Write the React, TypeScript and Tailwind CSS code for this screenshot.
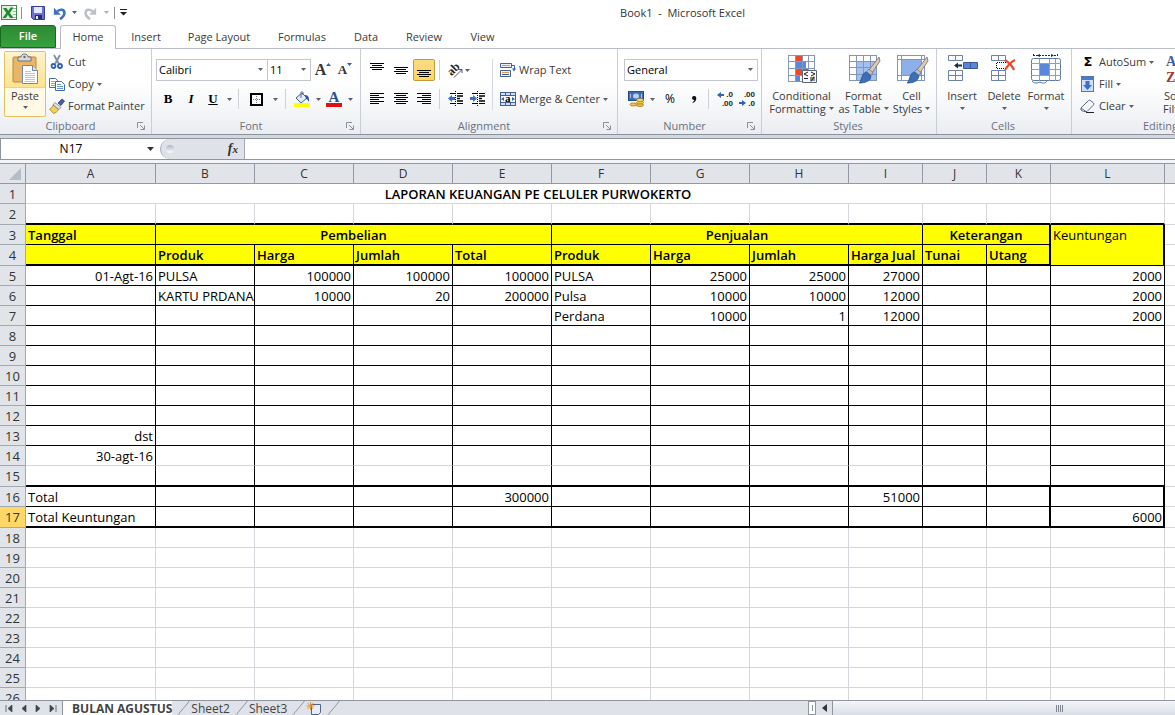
import type { ReactNode } from "react"

type IconProps = { children: ReactNode; size?: number; box?: number }

function Icon({ children, size = 16, box = 16 }: IconProps) {
    return (
        <svg width={size} height={size} viewBox={`0 0 ${box} ${box}`} fill="none" className="shrink-0 overflow-visible" aria-hidden="true">
            {children}
        </svg>
    )
}

function Caret() {
    return (
        <svg width="5" height="3" viewBox="0 0 5 3" className="shrink-0" aria-hidden="true">
            <path d="M0 0h5L2.5 3z" fill="#5c6066" />
        </svg>
    )
}

/* ---------- Icons ---------- */

function ExcelLogo() {
    return (
        <Icon>
            <rect x=".5" y=".5" width="15" height="14" fill="#fff" stroke="#3b8f45" />
            <path d="M11 3.500h4M11 6.500h4M11 9.500h4M11 12.500h4" stroke="#8cc491" />
            <rect x="1" y="1" width="11" height="13" fill="#dff0da" />
            <path d="M2 3h3.500l1.800 2.800L9.500 2.500h3L8.800 8l3.700 5H9L6.900 9.800 4.800 13H1.500l3.800-5z" fill="#1f8a33" />
        </Icon>
    )
}

function SaveIcon() {
    return (
        <Icon>
            <path d="M1.500 1.500h13v13h-11l-2-2z" fill="#6a72d4" stroke="#363c94" />
            <path d="M4 2h8v6H4z" fill="#e4e9ff" />
            <path d="M5 10h7v4H5z" fill="#262b66" />
            <path d="M6 11h2v3H6z" fill="#e8ebff" />
        </Icon>
    )
}

function UndoIcon({ redo = false }: { redo?: boolean }) {
    return (
        <Icon size={14} box={16}>
            <g transform={redo ? "translate(16 0) scale(-1 1)" : undefined}>
                <path d="M5 6c4-3 8-2 8 2 0 3-2 5-5 7" stroke={redo ? "#bcc0c6" : "#3e70c4"} strokeWidth="3" />
                <path d="M1 2v8h8z" fill={redo ? "#bcc0c6" : "#3e70c4"} />
            </g>
        </Icon>
    )
}

function PasteIcon() {
    return (
        <Icon size={32} box={32}>
            <rect x="4" y="3" width="23" height="25" rx="1" fill="#e9b567" stroke="#b98a45" />
            <path d="M9 3h3c0-2 1.500-3 3.500-3S19 1 19 3h3v4H9z" fill="#d8dbe0" stroke="#6c7077" />
            <circle cx="15.500" cy="3" r="1.200" fill="#6c7077" />
            <path d="M13.500 11.500h10l5 5v13h-15z" fill="#fff" stroke="#6f87ab" />
            <path d="M23.500 11.500v5h5" fill="#dbe5f3" stroke="#6f87ab" />
            <path d="M16 17.500h6M16 19.500h10M16 21.500h10M16 23.500h10M16 25.500h10M16 27.500h10" stroke="#b3c7e4" />
        </Icon>
    )
}

function CutIcon() {
    return (
        <Icon>
            <path d="M5 1l5 9M11 1L6 10" stroke="#7d8ea8" strokeWidth="1.800" />
            <circle cx="4.500" cy="12" r="2" stroke="#2d62b4" strokeWidth="1.800" />
            <circle cx="11" cy="12" r="2" stroke="#2d62b4" strokeWidth="1.800" />
        </Icon>
    )
}

function CopyIcon() {
    return (
        <Icon>
            <path d="M.5 2.500h6l2 2v7h-8z" fill="#fff" stroke="#3f6cae" />
            <path d="M2 5.500h4M2 7.500h5M2 9.500h5" stroke="#86a9dc" />
            <path d="M6.500 5.500h6l3 3v6h-9z" fill="#fff" stroke="#3f6cae" />
            <path d="M8 8.500h4M8 10.500h6M8 12.500h6" stroke="#6b97d8" />
        </Icon>
    )
}

function BrushIcon() {
    return (
        <Icon>
            <path d="M9 5l4-4 2.500 2-3.500 4.500z" fill="#4a5fa5" stroke="#2f3d73" strokeWidth=".8" />
            <path d="M6 4.500l6 5-2 2-6-4.500z" fill="#e0e3ea" stroke="#7a7f8a" strokeWidth=".8" />
            <path d="M4 7l5.500 4.500c-1 2-3 3.500-5 4L.5 11C2.500 10 3.500 9 4 7z" fill="#f2cf62" stroke="#a27d22" strokeWidth=".8" />
        </Icon>
    )
}

function BordersIcon() {
    return (
        <svg width="13" height="13" viewBox="0 0 13 13" fill="none" shapeRendering="crispEdges" aria-hidden="true">
            <rect x="1" y="1" width="11" height="11" stroke="#000" strokeWidth="2" fill="#fff" />
            <path d="M6.500 3v8M3 6.500h8" stroke="#777" strokeDasharray="1 1" />
        </svg>
    )
}

function BucketIcon() {
    return (
        <Icon>
            <path d="M2 7l6-5 5 5-6 5z" fill="#e4ecf7" stroke="#3c5d94" />
            <path d="M7 7V1.500c0-1 2-1 2 0V4" stroke="#5b6b85" />
            <path d="M11 4c3 0 4.500 2 4 7-1-2-2-3-3-3z" fill="#2d57a5" />
            <path d="M0 12h16v4H0z" fill="#ffff00" />
        </Icon>
    )
}

// bars are [x, width] pairs, one for each text line
function LinesIcon({ bars, y }: { bars: [number, number][]; y: number }) {
    return (
        <svg width="15" height="16" viewBox="0 0 15 16" shapeRendering="crispEdges" aria-hidden="true">
            {bars.map(([x, w], i) => (
                <rect key={i} x={x} y={y + i * 2} width={w} height="1" fill="#000" />
            ))}
        </svg>
    )
}

const shortBars: [number, number][] = [[0, 14], [2, 10], [0, 14], [2, 10]]
const leftBars: [number, number][] = [[0, 14], [0, 9], [0, 14], [0, 9], [0, 14], [0, 9]]
const centerBars: [number, number][] = [[0, 14], [2, 10], [0, 14], [2, 10], [0, 14], [2, 10]]
const rightBars: [number, number][] = [[0, 14], [5, 9], [0, 14], [5, 9], [0, 14], [5, 9]]

function IndentIcon({ increase = false }: { increase?: boolean }) {
    return (
        <Icon>
            <path d="M2 2.500h5M9 2.500h6M2 12.500h5M9 12.500h6" stroke="#000" />
            <path d="M9 5h6M9 7.500h3M9 10h6" stroke="#000" strokeWidth="1.500" />
            <path d="M7.500 0v16" stroke="#000" strokeDasharray="1 1" />
            <path d={increase ? "M0 6h3V4l4 3.500L3 11V9H0z" : "M7 6H4V4L0 7.500 4 11V9h3z"} fill="#3a6fc6" />
        </Icon>
    )
}

function WrapIcon() {
    return (
        <Icon>
            <path d="M.5 1.500h11v4H.5zM.5 8.500h10v6H.5z" fill="#eef3fb" stroke="#44618f" />
            <path d="M2 3.500h8M2 10.500h7" stroke="#e09a4b" />
            <path d="M2 12.500h7" stroke="#44618f" />
            <path d="M11.500 3.500h3v4" stroke="#2d62b4" />
            <path d="M12 6.500h4l-2 3z" fill="#2d62b4" />
        </Icon>
    )
}

function MergeIcon() {
    return (
        <Icon>
            <rect x=".5" y="1.500" width="15" height="13" fill="#cfdff5" stroke="#44618f" />
            <path d="M0 4.500h16M0 11.500h16M5.500 1v3M10.500 1v3M5.500 12v3M10.500 12v3" stroke="#44618f" />
            <path d="M1 5h14v6H1z" fill="#fff" />
            <path d="M1 8l3-2v4zM15 8l-3-2v4z" fill="#2d62b4" />
            <text x="5" y="11" fontSize="11" fontWeight="700" fontFamily="Liberation Serif, serif" fill="#000">
                a
            </text>
        </Icon>
    )
}

function CurrencyIcon() {
    return (
        <Icon>
            <rect x=".5" y=".5" width="15" height="9" fill="#3e6cb6" stroke="#2a4c86" />
            <ellipse cx="8" cy="5" rx="3" ry="2.500" fill="#b9d0f2" />
            <path d="M2.500 3v4M13.500 3v4" stroke="#a9c4ec" />
            <ellipse cx="5.500" cy="13.500" rx="3.500" ry="1.500" fill="#f0c64a" stroke="#a47a17" strokeWidth=".8" />
            <path d="M9 9h6v5.500H9z" fill="#f0c64a" />
            <ellipse cx="12" cy="14" rx="3.500" ry="1.500" fill="#f0c64a" stroke="#a47a17" strokeWidth=".8" />
            <ellipse cx="12" cy="11.500" rx="3.500" ry="1.500" fill="#f0c64a" stroke="#a47a17" strokeWidth=".8" />
            <ellipse cx="12" cy="9" rx="3.500" ry="1.500" fill="#fbe08a" stroke="#a47a17" strokeWidth=".8" />
        </Icon>
    )
}

function DecimalIcon({ top, bottom, left = false }: { top: string; bottom: string; left?: boolean }) {
    return (
        <Icon>
            <g fontFamily="Liberation Sans, sans-serif" fontSize="8" fontWeight="700" fill="#222">
                <text x="16" y="6" textAnchor="end">{top}</text>
                <text x="16" y="15" textAnchor="end">{bottom}</text>
            </g>
            <path d={left ? "M0 4l4-3v2h3v2H4v2z" : "M7 12l-4-3v2H0v2h3v2z"} fill="#2d62b4" />
        </Icon>
    )
}

function ConditionalIcon() {
    return (
        <Icon size={32} box={32}>
            <path d="M2 1h27v27H2z" fill="#fff" />
            <path d="M9 1h7v7H9z" fill="#e8492f" />
            <path d="M9 7.500h11v6.500H9z" fill="#5b86dd" />
            <path d="M9 14h14v7H9z" fill="#e8492f" />
            <path d="M9 21h5v7H9z" fill="#5b86dd" />
            <path d="M2.500 1v27M9.500 1v27M16.500 1v27M22.500 1v27M28.500 1v27M2 1.500h27M2 7.500h27M2 14.500h27M2 21.500h27M2 27.500h27" stroke="#8398bd" />
            <path d="M16.500 16.500h14v12h-14z" fill="#f7f9fc" stroke="#59657a" />
            <path d="M22 18l-4 2 4 2M18 24.500h4M25 18l4 2-4 2M24 24h5M24 26h5M28 22.500l-3 5" stroke="#222" />
        </Icon>
    )
}

function PaintBrush() {
    return (
        <>
            <path d="M31 3L21 16l3 3 8-12z" fill="#d9cbb5" stroke="#7d6b55" strokeWidth=".8" />
            <path d="M21 15l4 3.500-2 3-4.500-4z" fill="#b7bcc6" stroke="#6d7480" strokeWidth=".8" />
            <path d="M18 18l5 4c-1 5-5 7-12 7 3-2 2-9 7-11z" fill="#3d6fb8" stroke="#28508c" strokeWidth=".8" />
        </>
    )
}

function FormatTableIcon() {
    return (
        <Icon size={32} box={32}>
            <path d="M1 1h28v26H1z" fill="#fff" />
            <path d="M8 8h21v19H8z" fill="#a3c0f0" />
            <path d="M1.500 1v26M8.500 1v26M15.500 1v26M22.500 1v26M28.500 1v26M1 1.500h28M1 7.500h28M1 13.500h28M1 20.500h28M1 26.500h28" stroke="#7f96bf" />
            <PaintBrush />
        </Icon>
    )
}

function CellStylesIcon() {
    return (
        <Icon size={32} box={32}>
            <path d="M1 1h28v26H1z" fill="#fff" />
            <path d="M6 6h19v16H6z" fill="#8db0ea" />
            <path d="M1.500 1v26M5.500 1v26M25.500 1v26M28.500 1v26M1 1.500h28M1 5.500h28M1 21.500h28M1 26.500h28" stroke="#7f96bf" />
            <PaintBrush />
        </Icon>
    )
}

function InsertCellsIcon() {
    return (
        <Icon size={32} box={32}>
            <path d="M2.500 1.500h14v5h-14zM9.500 1v6M2.500 16.500h14v10h-14zM9.500 16v11M2 21.500h15" fill="#fff" stroke="#6d82a8" />
            <path d="M17.500 8.500h14v6h-14z" fill="#5b86dd" stroke="#3a5796" />
            <path d="M24.500 8v7" stroke="#3a5796" />
            <path d="M8 11.500l4-3v2h4v2h-4v2z" fill="#1d2b45" />
        </Icon>
    )
}

function DeleteCellsIcon() {
    return (
        <Icon size={32} box={32}>
            <path d="M3.500 1.500h14v5h-14zM10.500 1v6M3.500 16.500h14v10h-14zM10.500 16v11M3 21.500h15" fill="#fff" stroke="#6d82a8" />
            <path d="M9 8.500h10M9 14.500h10M8.500 9v6" stroke="#000" strokeDasharray="1 1" />
            <path d="M17 6c3 2 7 5 9 10M27 6c-4 2-7 5-10 10" stroke="#e8492f" strokeWidth="2.200" />
        </Icon>
    )
}

function FormatCellsIcon() {
    return (
        <Icon size={32} box={32}>
            <path d="M3 1.500h24M3.500 0v3M27.500 0v3" stroke="#1d2b45" strokeDasharray="2 1" />
            <path d="M10 0L7 1.500 10 3zM21 0l3 1.500L21 3z" fill="#1d2b45" />
            <rect x="1.500" y="4.500" width="29" height="22" rx="2" fill="#fff" stroke="#5c77a8" />
            <path d="M1 9.500h30M1 15.500h30M1 21.500h30M9.500 5v22M19.500 5v22M25.500 5v22" stroke="#8ba0c6" />
            <path d="M10 10h9v11h-9z" fill="#5b86dd" />
            <path d="M2 27c2 3 6 2 8 1 3 2 6 1 7-1" stroke="#5c77a8" fill="#fff" />
        </Icon>
    )
}

function FillIcon() {
    return (
        <Icon>
            <rect x="1.500" y=".5" width="12" height="15" fill="#cfe0f8" stroke="#5877a8" />
            <path d="M1 1h13v3H1z" fill="#4a7bd0" />
            <path d="M5.500 5h4v4H12l-4.500 5L3 9h2.500z" fill="#3a6fd0" />
        </Icon>
    )
}

function EraserIcon() {
    return (
        <Icon>
            <path d="M1 10l7-7c1-1 2-1 3 0l2 1.500c1 1 1 2 0 3L7 13.500H3.500L1 12z" fill="#f4f6fa" stroke="#5c6a80" />
            <path d="M1 10l5 3.500" stroke="#5c6a80" />
            <path d="M6 14.500h8" stroke="#222" />
        </Icon>
    )
}

/* ---------- Ribbon pieces ---------- */

function Group({ label, className, launcher = false, children }: { label: string; className: string; launcher?: boolean; children: ReactNode }) {
    return (
        <section aria-label={label} className={`flex shrink-0 flex-col border-r border-[#c9cdd4] ${className}`}>
            <div className="min-h-0 flex-1">{children}</div>
            <div className="flex h-4 items-center justify-end pr-[6px] pl-1">
                <span className="flex-1 text-center text-[#69707c]">{label}</span>
                {launcher && (
                    <button aria-label={`${label} settings`}>
                        <svg width="8" height="8" viewBox="0 0 8 8" fill="none" aria-hidden="true">
                            <path d="M.5 6V.5H6M3 3l4 4M7.500 3.500v4h-4" stroke="#8b919b" />
                        </svg>
                    </button>
                )}
            </div>
        </section>
    )
}

function Tool({ label, className = "w-6", children }: { label: string; className?: string; children: ReactNode }) {
    return (
        <button aria-label={label} className={`flex h-[22px] shrink-0 items-center justify-center ${className}`}>
            {children}
        </button>
    )
}

function Divider() {
    return <span className="mx-1 h-5 w-px shrink-0 bg-[#cdd1d8]" />
}

function Combo({ label, value, className }: { label: string; value: string; className: string }) {
    return (
        <div className={`relative h-[22px] border border-[#c3c7cf] bg-white ${className}`}>
            <select aria-label={label} defaultValue={value} className="block h-5 w-full appearance-none bg-transparent px-[2px] text-black outline-none">
                <option>{value}</option>
            </select>
            <span className="pointer-events-none absolute top-[8px] right-[4px] flex">
                <Caret />
            </span>
        </div>
    )
}

function SmallButton({ icon, text, menu = false }: { icon: ReactNode; text: string; menu?: boolean }) {
    return (
        <button className="flex h-[22px] items-center gap-[3px] whitespace-nowrap">
            {icon}
            <span>{text}</span>
            {menu && <Caret />}
        </button>
    )
}

function BigButton({ icon, lines, className }: { icon: ReactNode; lines: [string, string?]; className: string }) {
    return (
        <button className={`flex shrink-0 flex-col items-center whitespace-nowrap leading-[13px] ${className}`}>
            {icon}
            <span className="mt-[3px]">{lines[0]}</span>
            <span className="flex h-[13px] items-center gap-[3px]">
                {lines[1]}
                <Caret />
            </span>
        </button>
    )
}

function Ribbon() {
    return (
        <div className="flex h-[86px] shrink-0 overflow-hidden border-b border-[#8c929b] bg-linear-to-b from-white from-40% to-[#eaedf1]">
            <Group label="Clipboard" className="w-[152px]" launcher>
                <div className="flex pt-[2px] pl-1">
                    <button className="flex h-[66px] w-[42px] flex-col items-center rounded-[2px] border border-[#e3c15f] bg-[#fff9e6]">
                        <span className="flex h-9 w-full items-center justify-center border-b border-[#ecd37f] bg-linear-to-b from-[#fdf3cf] to-[#fce38f]">
                            <PasteIcon />
                        </span>
                        <span className="leading-4">Paste</span>
                        <span className="flex pt-[2px]"><Caret /></span>
                    </button>
                    <div className="pl-[3px]">
                        <SmallButton icon={<CutIcon />} text="Cut" />
                        <SmallButton icon={<CopyIcon />} text="Copy" menu />
                        <SmallButton icon={<BrushIcon />} text="Format Painter" />
                    </div>
                </div>
            </Group>

            <Group label="Font" className="w-[209px]" launcher>
                <div className="flex flex-col gap-[7px] pt-[10px] pl-1">
                    <div className="flex items-center">
                        <Combo label="Font name" value="Calibri" className="w-[112px]" />
                        <Combo label="Font size" value="11" className="w-[43px] border-l-0" />
                        <Tool label="Grow font">
                            <span className="font-['Liberation_Serif',serif] text-base font-bold text-[#333]">A</span>
                            <svg width="5" height="3" viewBox="0 0 5 3" className="mb-3" aria-hidden="true">
                                <path d="M0 3h5L2.500 0z" fill="#2d62b4" />
                            </svg>
                        </Tool>
                        <Tool label="Shrink font" className="w-5">
                            <span className="font-['Liberation_Serif',serif] text-[13px] font-bold text-[#333]">A</span>
                            <svg width="5" height="3" viewBox="0 0 5 3" className="mb-3" aria-hidden="true">
                                <path d="M0 0h5L2.500 3z" fill="#2d62b4" />
                            </svg>
                        </Tool>
                    </div>
                    <div className="flex items-center text-black">
                        <Tool label="Bold">
                            <span className="font-['Liberation_Serif',serif] text-[13px] font-bold">B</span>
                        </Tool>
                        <Tool label="Italic" className="w-[22px]">
                            <span className="font-['Liberation_Serif',serif] text-[13px] font-bold italic">I</span>
                        </Tool>
                        <Tool label="Underline" className="w-[22px]">
                            <span className="font-['Liberation_Serif',serif] text-[13px] font-bold underline">U</span>
                        </Tool>
                        <Tool label="Underline style" className="w-[10px]"><Caret /></Tool>
                        <Divider />
                        <Tool label="Borders" className="w-[26px]"><BordersIcon /></Tool>
                        <Tool label="Border style" className="w-3"><Caret /></Tool>
                        <Divider />
                        <Tool label="Fill colour"><BucketIcon /></Tool>
                        <Tool label="Fill colour list" className="w-2"><Caret /></Tool>
                        <Tool label="Font colour">
                            <span className="flex w-4 flex-col items-center border-b-4 border-[#e01010] font-['Liberation_Serif',serif] text-[15px] leading-3 font-bold text-[#2c4f8f]">A</span>
                        </Tool>
                        <Tool label="Font colour list" className="w-2"><Caret /></Tool>
                    </div>
                </div>
            </Group>

            <Group label="Alignment" className="w-[257px]" launcher>
                <div className="flex pt-[10px] pl-1">
                    <div className="flex flex-col gap-[7px]">
                        <div className="flex items-center">
                            <Tool label="Top align"><LinesIcon bars={shortBars} y={1} /></Tool>
                            <Tool label="Middle align"><LinesIcon bars={shortBars} y={5} /></Tool>
                            <Tool label="Bottom align" className="w-[22px] rounded-[2px] border border-[#c29a3a] bg-linear-to-b from-[#fbdb83] to-[#ffd75e]">
                                <LinesIcon bars={shortBars} y={8} />
                            </Tool>
                            <Divider />
                            <Tool label="Orientation" className="w-7 gap-[2px]">
                                <Icon>
                                    <text x="1" y="10" transform="rotate(-45 8 8)" fontFamily="Liberation Serif, serif" fontSize="12" fontWeight="700" fill="#222">ab</text>
                                    <path d="M7 15.500l8-8M15 11V7.500h-4" stroke="#555" />
                                </Icon>
                                <Caret />
                            </Tool>
                        </div>
                        <div className="flex items-center">
                            <Tool label="Align left"><LinesIcon bars={leftBars} y={2} /></Tool>
                            <Tool label="Centre"><LinesIcon bars={centerBars} y={2} /></Tool>
                            <Tool label="Align right" className="w-[22px]"><LinesIcon bars={rightBars} y={2} /></Tool>
                            <Divider />
                            <Tool label="Decrease indent"><IndentIcon /></Tool>
                            <Tool label="Increase indent" className="w-5"><IndentIcon increase /></Tool>
                        </div>
                    </div>
                    <div className="ml-1 flex flex-col gap-[7px] border-l border-[#d5d8de] pl-[7px]">
                        <SmallButton icon={<WrapIcon />} text="Wrap Text" />
                        <SmallButton icon={<MergeIcon />} text="Merge & Center" menu />
                    </div>
                </div>
            </Group>

            <Group label="Number" className="w-[144px]" launcher>
                <div className="flex flex-col gap-[7px] pt-[10px] pr-[3px] pl-[6px]">
                    <Combo label="Number format" value="General" className="w-full" />
                    <div className="flex items-center text-black">
                        <Tool label="Currency"><CurrencyIcon /></Tool>
                        <Tool label="Currency list" className="w-2"><Caret /></Tool>
                        <Tool label="Percent" className="w-7"><span className="text-xs">%</span></Tool>
                        <Tool label="Comma" className="w-5">
                            <svg width="5" height="7" viewBox="0 0 5 7" aria-hidden="true">
                                <path d="M0 2a2 2 0 1 1 4.300.3C4.300 4.500 3 6.200.8 7L.5 6.200c1-.5 1.600-1.200 1.700-2.200C1 4 0 3.200 0 2z" fill="#111" />
                            </svg>
                        </Tool>
                        <Divider />
                        <Tool label="Increase decimal"><DecimalIcon top=".0" bottom=".00" left /></Tool>
                        <Tool label="Decrease decimal" className="w-5"><DecimalIcon top=".00" bottom=".0" /></Tool>
                    </div>
                </div>
            </Group>

            <Group label="Styles" className="w-[175px]">
                <div className="flex pt-[5px] pl-1">
                    <BigButton className="w-[71px]" icon={<ConditionalIcon />} lines={["Conditional", "Formatting"]} />
                    <BigButton className="w-[53px]" icon={<FormatTableIcon />} lines={["Format", "as Table"]} />
                    <BigButton className="w-[43px]" icon={<CellStylesIcon />} lines={["Cell", "Styles"]} />
                </div>
            </Group>

            <Group label="Cells" className="w-[135px]">
                <div className="flex pt-[5px] pl-1">
                    <BigButton className="w-[42px]" icon={<InsertCellsIcon />} lines={["Insert"]} />
                    <BigButton className="w-[42px]" icon={<DeleteCellsIcon />} lines={["Delete"]} />
                    <BigButton className="w-[42px]" icon={<FormatCellsIcon />} lines={["Format"]} />
                </div>
            </Group>

            <Group label="Editing" className="w-[180px]">
                <div className="flex pt-[2px] pl-2">
                    <div className="w-[80px]">
                        <SmallButton
                            icon={<span className="w-4 text-center font-['DejaVu_Sans',sans-serif] text-[13px] font-bold text-black">Σ</span>}
                            text="AutoSum"
                            menu
                        />
                        <SmallButton icon={<FillIcon />} text="Fill" menu />
                        <SmallButton icon={<EraserIcon />} text="Clear" menu />
                    </div>
                    <div className="pt-[3px]">
                        <BigButton
                            className="w-10"
                            icon={
                                <span className="flex h-8 w-7 flex-col font-['Liberation_Serif',serif] text-sm leading-4 font-bold">
                                    <span className="self-start text-[#3a62a8]">A</span>
                                    <span className="self-start text-[#a83232]">Z</span>
                                </span>
                            }
                            lines={["Sort &", "Filter"]}
                        />
                    </div>
                </div>
            </Group>
        </div>
    )
}

/* ---------- Sheet ---------- */

const columns: [string, string][] = [
    ["A", "w-[130px]"],
    ["B", "w-[99px]"],
    ["C", "w-[99px]"],
    ["D", "w-[99px]"],
    ["E", "w-[99px]"],
    ["F", "w-[99px]"],
    ["G", "w-[99px]"],
    ["H", "w-[99px]"],
    ["I", "w-[74px]"],
    ["J", "w-[64px]"],
    ["K", "w-[64px]"],
    ["L", "w-[114px]"],
]

const subheads = ["", "Produk", "Harga", "Jumlah", "Total", "Produk", "Harga", "Jumlah", "Harga Jual", "Tunai", "Utang"]

const values: Record<number, Record<string, string>> = {
    5: { A: "01-Agt-16", B: "PULSA", C: "100000", D: "100000", E: "100000", F: "PULSA", G: "25000", H: "25000", I: "27000", L: "2000" },
    6: { B: "KARTU PRDANA", C: "10000", D: "20", E: "200000", F: "Pulsa", G: "10000", H: "10000", I: "12000", L: "2000" },
    7: { F: "Perdana", G: "10000", H: "1", I: "12000", L: "2000" },
    13: { A: "dst" },
    14: { A: "30-agt-16" },
    16: { A: "Total", E: "300000", I: "51000" },
    17: { A: "Total Keuntungan", L: "6000" },
}

// rows that close with a thick rule are one pixel taller
const thickRows = [2, 4, 15, 17]

const light = "border-[#d4d7dc]"

function RowHead({ n }: { n: number }) {
    return (
        <th
            scope="row"
            className={`border-r border-b border-[#a3a9b2] p-0 text-center font-normal text-[#333] ${n === 17 ? "bg-[#ffd766]" : "bg-[#e1e5ea]"}`}
        >
            {n}
        </th>
    )
}

function cellClass(n: number, col: string) {
    const inTable = n >= 5 && n <= 17
    let bottom = "border-b border-b-[#d4d7dc]"
    if (thickRows.includes(n)) bottom = "border-b-2 border-b-black"
    else if (inTable && (n !== 14 || col === "L")) bottom = "border-b border-b-black"

    let right = "border-r border-r-[#d4d7dc] pr-[2px]"
    if (n >= 16 && n <= 17 && (col === "K" || col === "L")) right = "border-r-2 border-r-black pr-px"
    else if (inTable) right = "border-r border-r-black pr-[2px]"

    const align = col === "B" || col === "F" || (col === "A" && n > 15) ? "text-left" : "text-right"
    return `${bottom} ${right} ${align} pl-[2px] py-0 overflow-hidden whitespace-nowrap`
}

function Spare() {
    return <td className={`border-b p-0 ${light}`} />
}

function Sheet() {
    const rows = Array.from({ length: 22 }, (_, i) => i + 5)
    return (
        <div className="min-h-0 flex-1 overflow-hidden bg-white font-['Open_Sans','Noto_Sans',sans-serif] text-[13px] leading-[18px] text-black">
            <table className="w-full table-fixed border-separate border-spacing-0">
                <colgroup>
                    <col className="w-[26px]" />
                    {columns.map(([name, width]) => (
                        <col key={name} className={width} />
                    ))}
                    <col />
                </colgroup>
                <thead>
                    <tr className="h-[21px]">
                        <th className="border-t border-r border-b border-[#9299a4] bg-[#e1e5ea] p-0">
                            <svg width="12" height="12" viewBox="0 0 12 12" className="mr-1 ml-auto" aria-hidden="true">
                                <path d="M12 0v12H0z" fill="#b6bcc5" />
                            </svg>
                        </th>
                        {columns.map(([name]) => (
                            <th key={name} scope="col" className="border-t border-r border-b border-[#9299a4] bg-[#e1e5ea] p-0 pt-px text-center text-[12px] font-normal text-[#333]">
                                {name}
                            </th>
                        ))}
                        <th className="border-t border-b border-[#9299a4] bg-[#e1e5ea] p-0" />
                    </tr>
                </thead>
                <tbody>
                    <tr className="h-5">
                        <RowHead n={1} />
                        <td colSpan={11} className={`border-r border-b p-0 text-center font-semibold ${light}`}>
                            LAPORAN KEUANGAN PE CELULER PURWOKERTO
                        </td>
                        <td className={`border-r border-b p-0 ${light}`} />
                        <Spare />
                    </tr>
                    <tr className="h-[21px]">
                        <RowHead n={2} />
                        {columns.map(([name]) => (
                            <td key={name} className={cellClass(2, name)} />
                        ))}
                        <Spare />
                    </tr>
                    <tr className="h-5 font-semibold">
                        <RowHead n={3} />
                        <td className="border-r border-b border-black bg-[#ffff00] px-[2px] py-0">Tanggal</td>
                        <td colSpan={4} className="border-r border-b border-black bg-[#ffff00] p-0 text-center">Pembelian</td>
                        <td colSpan={4} className="border-r border-b border-black bg-[#ffff00] p-0 text-center">Penjualan</td>
                        <td colSpan={2} className="border-r-2 border-b border-black bg-[#ffff00] p-0 text-center">Keterangan</td>
                        <td rowSpan={2} className="border-r-2 border-b border-black bg-[#ffff00] px-[2px] pt-px pb-0 align-top font-normal">Keuntungan</td>
                        <Spare />
                    </tr>
                    <tr className="h-[21px] font-semibold">
                        <RowHead n={4} />
                        {subheads.map((text, i) => (
                            <td
                                key={i}
                                className={`overflow-hidden border-b-2 border-black bg-[#ffff00] px-[2px] py-0 whitespace-nowrap ${i === 10 ? "border-r-2" : "border-r"}`}
                            >
                                {text}
                            </td>
                        ))}
                        <Spare />
                    </tr>
                    {rows.map((n) => (
                        <tr key={n} className={thickRows.includes(n) ? "h-[21px]" : "h-5"}>
                            <RowHead n={n} />
                            {columns.map(([name]) => (
                                <td key={name} className={cellClass(n, name)}>
                                    {values[n]?.[name]}
                                </td>
                            ))}
                            <Spare />
                        </tr>
                    ))}
                </tbody>
            </table>
        </div>
    )
}

/* ---------- Window ---------- */

const tabs: [string, string][] = [
    ["Insert", "w-[60px]"],
    ["Page Layout", "w-[86px]"],
    ["Formulas", "w-[80px]"],
    ["Data", "w-[48px]"],
    ["Review", "w-[68px]"],
    ["View", "w-[49px]"],
]

function TitleBar() {
    return (
        <header className="grid h-[25px] shrink-0 grid-cols-[1fr_auto_1fr] items-center text-[#333]">
            <div className="flex items-center pl-px">
                <ExcelLogo />
                <span className="mx-1 h-3 w-px bg-[#8b9099]" />
                <Tool label="Save"><SaveIcon /></Tool>
                <Tool label="Undo" className="w-5"><UndoIcon /></Tool>
                <Tool label="Undo list" className="w-2"><Caret /></Tool>
                <Tool label="Redo"><UndoIcon redo /></Tool>
                <Tool label="Redo list" className="w-2 opacity-50"><Caret /></Tool>
                <span className="ml-1 h-3 w-px bg-[#8b9099]" />
                <Tool label="Customize toolbar" className="w-4">
                    <svg width="7" height="7" viewBox="0 0 7 7" aria-hidden="true">
                        <path d="M0 0h7v1H0zM0 3h7L3.500 6.500z" fill="#222" />
                    </svg>
                </Tool>
            </div>
            <h1 className="pt-px pl-[190px] whitespace-pre">Book1  -  Microsoft Excel</h1>
        </header>
    )
}

function FormulaBar() {
    return (
        <div className="flex h-[28px] shrink-0 flex-col bg-[#f3f5f8]">
            <div className="h-[3px] bg-[#d3d7de]" />
            <div className="flex h-[22px] border-y border-[#8f959f] bg-white">
                <div className="flex w-[160px] items-center border-l border-[#8f959f] pr-[6px]">
                    <input aria-label="Name box" defaultValue="N17" className="w-full min-w-0 flex-1 bg-transparent pr-[6px] text-center text-xs text-black outline-none" />
                    <svg width="7" height="4" viewBox="0 0 7 4" aria-hidden="true">
                        <path d="M0 0h7L3.500 4z" fill="#333" />
                    </svg>
                </div>
                <div className="flex w-[85px] items-center justify-between rounded-l-full border-r border-l border-[#a4aab4] bg-[#dfe3e9] pr-[6px] pl-[5px]">
                    <span className="h-2 w-2 rounded-full bg-linear-to-b from-[#aeb4be] to-white" />
                    <button aria-label="Insert function" className="font-['Liberation_Serif',serif] text-sm leading-4 font-bold text-[#333] italic">
                        f<span className="text-[11px]">x</span>
                    </button>
                </div>
                <input aria-label="Formula" className="min-w-0 flex-1 bg-white px-1 outline-none" />
            </div>
        </div>
    )
}

function SheetTab({ children, label }: { children: ReactNode; label?: string }) {
    return (
        <button aria-label={label} className="flex h-[15px] items-center gap-px pl-[5px]">
            <svg width="13" height="15" viewBox="0 0 13 15" fill="none" aria-hidden="true">
                <path d="M0 15L12.500 0" stroke="#8f959f" />
            </svg>
            {children}
        </button>
    )
}

function Footer() {
    return (
        <footer className="flex h-[15px] shrink-0 overflow-hidden border-t border-[#8f959f] bg-[#dfe3e9] text-[12px] leading-[15px] text-[#444]">
            <div className="flex w-[63px] items-center justify-around border-r border-[#8f959f] px-[2px]">
                {["M1 0v7M7 0L3 3.500 7 7z", "M6 0L2 3.500 6 7z", "M2 0l4 3.500L2 7z", "M7 0v7M1 0l4 3.500L1 7z"].map((d, i) => (
                    <button key={d} aria-label={["First sheet", "Previous sheet", "Next sheet", "Last sheet"][i]}>
                        <svg width="8" height="7" viewBox="0 0 8 7" aria-hidden="true">
                            <path d={d} fill="#3d4450" stroke="#3d4450" strokeWidth=".7" />
                        </svg>
                    </button>
                ))}
            </div>
            <button className="bg-white pl-[9px] font-bold">BULAN AGUSTUS</button>
            <SheetTab>Sheet2</SheetTab>
            <SheetTab>Sheet3</SheetTab>
            <SheetTab label="Insert sheet">
                <svg width="16" height="14" viewBox="0 0 16 14" fill="none" aria-hidden="true">
                    <path d="M5.500 2.500h9v8l-2 2h-7z" fill="#e8eef8" stroke="#4e648c" />
                    <path d="M4.500 0v8M.5 4h8M1.500 1l6 6M7.500 1l-6 6" stroke="#e2922e" />
                </svg>
            </SheetTab>
            <SheetTab label="End of sheets">{null}</SheetTab>
            <div className="flex-1" />
            <div className="flex w-[367px] shrink-0">
                <span className="flex w-2 justify-center border border-[#8f959f] bg-white py-[3px]">
                    <span className="w-px bg-[#8f959f]" />
                </span>
                <button aria-label="Scroll left" className="flex w-4 items-center justify-center">
                    <svg width="5" height="8" viewBox="0 0 5 8" aria-hidden="true">
                        <path d="M5 0v8L0 4z" fill="#333" />
                    </svg>
                </button>
                <div className="flex flex-1 items-center justify-center gap-px border-l border-[#8f959f] bg-linear-to-b from-[#f4f6f9] to-[#d9dee6] pl-[110px]">
                    {[0, 1, 2, 3].map((i) => (
                        <span key={i} className="h-[7px] w-px bg-[#7d8490]" />
                    ))}
                </div>
            </div>
        </footer>
    )
}

export default function App() {
    return (
        <div className="flex h-screen flex-col overflow-hidden bg-white font-['Open_Sans','Noto_Sans',sans-serif] text-[11px] text-[#3b3b3b]">
            <TitleBar />
            <nav className="flex h-6 shrink-0 border-b border-[#b9bec6]">
                <button className="w-14 rounded-t-[3px] border border-[#17691c] bg-linear-to-b from-[#2f8a35] to-[#37a13d] font-semibold text-white">File</button>
                <button className="-mb-px ml-1 w-14 rounded-t-[3px] border border-b-0 border-[#b9bec6] bg-white">Home</button>
                <div className="flex pt-px">
                    {tabs.map(([name, width]) => (
                        <button key={name} className={width}>{name}</button>
                    ))}
                </div>
            </nav>
            <Ribbon />
            <FormulaBar />
            <Sheet />
            <Footer />
        </div>
    )
}
